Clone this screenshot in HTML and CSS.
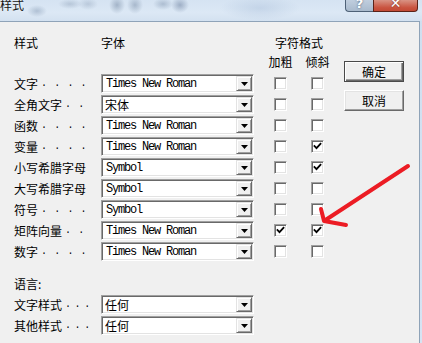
FILE: index.html
```html
<!DOCTYPE html>
<html lang="zh">
<head>
<meta charset="utf-8">
<link rel="stylesheet" href="styles.css">
</head>
<body>
<div class="window">
  <div class="titlebar">
    <span class="title">样式</span>
    <div class="caption-btns">
      <span class="cap help">?</span>
      <span class="cap close">✕</span>
    </div>
  </div>
  <div class="client">
    <div class="main">
      <div class="hdr hdr1">
        <span class="c-label">样式</span>
        <span class="c-font">字体</span>
        <span class="c-fmt">字符格式</span>
      </div>
      <div class="hdr hdr2">
        <span class="c-label"></span>
        <span class="c-font"></span>
        <span class="c-chk">加粗</span>
        <span class="c-chk c-chk2">倾斜</span>
      </div>

      <div class="rows">
        <div class="row">
          <span class="c-label">文字<span class="dots">. . . .</span></span>
          <div class="combo"><span class="val mono">Times New Roman</span><span class="drop"><svg width="7" height="4" viewBox="0 0 7 4"><path d="M0 0h7L3.5 4z"/></svg></span></div>
          <span class="cell"><span class="chk"></span></span>
          <span class="cell cell2"><span class="chk"></span></span>
        </div>
        <div class="row">
          <span class="c-label">全角文字<span class="dots">. .</span></span>
          <div class="combo"><span class="val">宋体</span><span class="drop"><svg width="7" height="4" viewBox="0 0 7 4"><path d="M0 0h7L3.5 4z"/></svg></span></div>
          <span class="cell"><span class="chk"></span></span>
          <span class="cell cell2"><span class="chk"></span></span>
        </div>
        <div class="row">
          <span class="c-label">函数<span class="dots">. . . .</span></span>
          <div class="combo"><span class="val mono">Times New Roman</span><span class="drop"><svg width="7" height="4" viewBox="0 0 7 4"><path d="M0 0h7L3.5 4z"/></svg></span></div>
          <span class="cell"><span class="chk"></span></span>
          <span class="cell cell2"><span class="chk"></span></span>
        </div>
        <div class="row">
          <span class="c-label">变量<span class="dots">. . . .</span></span>
          <div class="combo"><span class="val mono">Times New Roman</span><span class="drop"><svg width="7" height="4" viewBox="0 0 7 4"><path d="M0 0h7L3.5 4z"/></svg></span></div>
          <span class="cell"><span class="chk"></span></span>
          <span class="cell cell2"><span class="chk on"><svg width="9" height="9" viewBox="0 0 9 9"><path d="M1.5 4 L3.5 6.2 L7.5 1.8"/></svg></span></span>
        </div>
        <div class="row">
          <span class="c-label">小写希腊字母</span>
          <div class="combo"><span class="val mono">Symbol</span><span class="drop"><svg width="7" height="4" viewBox="0 0 7 4"><path d="M0 0h7L3.5 4z"/></svg></span></div>
          <span class="cell"><span class="chk"></span></span>
          <span class="cell cell2"><span class="chk on"><svg width="9" height="9" viewBox="0 0 9 9"><path d="M1.5 4 L3.5 6.2 L7.5 1.8"/></svg></span></span>
        </div>
        <div class="row">
          <span class="c-label">大写希腊字母</span>
          <div class="combo"><span class="val mono">Symbol</span><span class="drop"><svg width="7" height="4" viewBox="0 0 7 4"><path d="M0 0h7L3.5 4z"/></svg></span></div>
          <span class="cell"><span class="chk"></span></span>
          <span class="cell cell2"><span class="chk"></span></span>
        </div>
        <div class="row">
          <span class="c-label">符号<span class="dots">. . . .</span></span>
          <div class="combo"><span class="val mono">Symbol</span><span class="drop"><svg width="7" height="4" viewBox="0 0 7 4"><path d="M0 0h7L3.5 4z"/></svg></span></div>
          <span class="cell"><span class="chk"></span></span>
          <span class="cell cell2"><span class="chk"></span></span>
        </div>
        <div class="row">
          <span class="c-label">矩阵向量<span class="dots">. .</span></span>
          <div class="combo"><span class="val mono">Times New Roman</span><span class="drop"><svg width="7" height="4" viewBox="0 0 7 4"><path d="M0 0h7L3.5 4z"/></svg></span></div>
          <span class="cell"><span class="chk on"><svg width="9" height="9" viewBox="0 0 9 9"><path d="M1.5 4 L3.5 6.2 L7.5 1.8"/></svg></span></span>
          <span class="cell cell2"><span class="chk on"><svg width="9" height="9" viewBox="0 0 9 9"><path d="M1.5 4 L3.5 6.2 L7.5 1.8"/></svg></span></span>
        </div>
        <div class="row">
          <span class="c-label">数字<span class="dots">. . . .</span></span>
          <div class="combo"><span class="val mono">Times New Roman</span><span class="drop"><svg width="7" height="4" viewBox="0 0 7 4"><path d="M0 0h7L3.5 4z"/></svg></span></div>
          <span class="cell"><span class="chk"></span></span>
          <span class="cell cell2"><span class="chk"></span></span>
        </div>
      </div>

      <div class="lang">语言:</div>
      <div class="rows lang-rows">
        <div class="row">
          <span class="c-label">文字样式<span class="dots short">. . .</span></span>
          <div class="combo"><span class="val">任何</span><span class="drop"><svg width="7" height="4" viewBox="0 0 7 4"><path d="M0 0h7L3.5 4z"/></svg></span></div>
        </div>
        <div class="row">
          <span class="c-label">其他样式<span class="dots short">. . .</span></span>
          <div class="combo"><span class="val">任何</span><span class="drop"><svg width="7" height="4" viewBox="0 0 7 4"><path d="M0 0h7L3.5 4z"/></svg></span></div>
        </div>
      </div>
    </div>
    <div class="buttons">
      <span class="btn default">确定</span>
      <span class="btn">取消</span>
    </div>
  </div>
  <svg class="arrow" width="422" height="343" viewBox="0 0 422 343">
    <path d="M408 166 L324 221 M321 209 L324 221 L346 225"/>
  </svg>
</div>
</body>
</html>
```

FILE: styles.css
```css
* { box-sizing: border-box; }
html, body { margin: 0; padding: 0; }
body {
  width: 422px;
  height: 343px;
  overflow: hidden;
  font-family: "Noto Sans CJK SC", "Noto Sans", sans-serif;
  font-size: 12px;
  color: #000;
}
.window {
  position: relative;
  width: 422px;
  height: 343px;
  overflow: hidden;
  background: linear-gradient(180deg, #cfdff0 0%, #d6e4f3 100%);
  display: flex;
  flex-direction: column;
}
.titlebar {
  height: 21px;
  flex: none;
  display: flex;
  justify-content: space-between;
  align-items: flex-start;
  background:
    radial-gradient(ellipse 10px 6px at 37px 11px, rgba(140,160,185,0.55), rgba(140,160,185,0) 100%),
    radial-gradient(ellipse 12px 5px at 70px 4px, rgba(150,168,190,0.5), rgba(150,168,190,0) 100%),
    radial-gradient(ellipse 10px 6px at 88px 4px, rgba(150,168,190,0.45), rgba(150,168,190,0) 100%),
    radial-gradient(ellipse 8px 9px at 117px 5px, rgba(120,140,165,0.55), rgba(120,140,165,0) 100%),
    radial-gradient(ellipse 8px 9px at 135px 5px, rgba(120,140,165,0.5), rgba(120,140,165,0) 100%),
    radial-gradient(ellipse 10px 6px at 163px 4px, rgba(130,150,175,0.5), rgba(130,150,175,0) 100%),
    radial-gradient(ellipse 9px 8px at 180px 5px, rgba(110,130,160,0.55), rgba(110,130,160,0) 100%),
    radial-gradient(ellipse 40px 12px at 260px 8px, rgba(175,195,220,0.5), rgba(175,195,220,0) 100%),
    linear-gradient(180deg, #d5e3f2 0%, #dce8f5 60%, #d3e1f0 100%);
}
.title {
  font-size: 12px;
  line-height: 12px;
  margin-top: -1px;
  color: #141414;
  text-shadow: 0 0 3px rgba(255,255,255,0.8);
}
.caption-btns {
  display: flex;
  margin-right: 4px;
}
.cap {
  height: 12px;
  display: flex;
  justify-content: center;
  align-items: flex-end;
  overflow: hidden;
  color: #fff;
  font-family: "DejaVu Sans", sans-serif;
  font-weight: bold;
  line-height: 1;
}
.help {
  width: 28px;
  border: 1px solid #4e6177;
  border-top: none;
  border-right: none;
  border-bottom-left-radius: 4px;
  background: linear-gradient(180deg, #c0cede 0%, #a9bacd 100%);
  font-size: 13px;
  text-shadow: 0 0 2px #3d4f66;
  padding-bottom: 1px;
}
.close {
  width: 45px;
  border: 1px solid #5b2218;
  border-top: none;
  border-bottom-right-radius: 4px;
  background: linear-gradient(180deg, #d99384 0%, #c9533f 70%, #c24a35 100%);
  font-size: 14px;
  text-shadow: 0 0 2px #6b1a10;
  padding-bottom: 1px;
}

.client {
  flex: 1;
  width: 420px;
  background: #f0f0f0;
  border-top: 1px solid #8fa3b8;
  border-right: 1px solid #8fa3b8;
  display: flex;
  align-items: flex-start;
  padding: 13px 0 0 14px;
}
.main {
  width: 316px;
  display: flex;
  flex-direction: column;
}
.hdr {
  display: flex;
  height: 16px;
  line-height: 16px;
}
.hdr2 { margin-top: 3px; }
.c-label {
  width: 87px;
  flex: none;
  white-space: nowrap;
  line-height: 16px;
  display: flex;
  align-items: center;
}
.c-font { width: 167px; flex: none; }
.c-fmt { width: 62px; text-align: center; }
.c-chk { width: 25px; text-align: center; flex: none; }
.c-chk2 { margin-left: 12px; }

.rows {
  display: flex;
  flex-direction: column;
  margin-top: 3px;
}
.row {
  height: 21px;
  display: flex;
  align-items: center;
}
.dots {
  font-family: "Liberation Mono", monospace;
  font-size: 10px;
  letter-spacing: 0.6px;
  margin-left: 3px;
  white-space: pre;
}
.dots.short {
  letter-spacing: -1.2px;
  margin-left: 3px;
}
.combo {
  width: 153px;
  height: 19px;
  flex: none;
  display: flex;
  align-items: stretch;
  background: #fff;
  border: 1px solid;
  border-color: #a0a0a0 #fff #fff #a0a0a0;
  box-shadow: inset 1px 1px #696969, inset -1px -1px #e3e3e3;
  padding: 1px;
}
.val {
  flex: 1;
  padding-left: 2px;
  display: flex;
  align-items: center;
  font-size: 12px;
  line-height: 15px;
  white-space: nowrap;
  overflow: hidden;
}
.val.mono {
  font-family: "Liberation Mono", monospace;
  font-size: 12px;
  letter-spacing: -1.2px;
  padding-left: 3px;
  padding-top: 2px;
}
.drop {
  width: 16px;
  flex: none;
  background: #f0f0f0;
  border: 1px solid;
  border-color: #e3e3e3 #696969 #696969 #e3e3e3;
  box-shadow: inset 1px 1px #fff, inset -1px -1px #a0a0a0;
  display: flex;
  justify-content: center;
  align-items: center;
}
.drop svg { display: block; fill: #000; }

.cell {
  width: 25px;
  flex: none;
  margin-left: 14px;
  display: flex;
  justify-content: center;
}
.cell2 { margin-left: 12px; }
.chk {
  width: 13px;
  height: 13px;
  background: #fff;
  border: 1px solid;
  border-color: #a0a0a0 #fff #fff #a0a0a0;
  box-shadow: inset 1px 1px #696969, inset -1px -1px #e3e3e3;
  display: flex;
  justify-content: center;
  align-items: center;
}
.chk svg {
  display: block;
  fill: none;
  stroke: #000;
  stroke-width: 1.8;
  stroke-linecap: square;
}

.lang {
  margin-top: 14px;
  height: 16px;
  line-height: 16px;
}
.lang-rows { margin-top: 2px; }

.buttons {
  margin-left: 14px;
  margin-top: 26px;
  display: flex;
  flex-direction: column;
  gap: 8px;
}
.btn {
  width: 60px;
  height: 21px;
  display: flex;
  justify-content: center;
  align-items: center;
  background: #f0f0f0;
  border: 1px solid;
  border-color: #fff #696969 #696969 #fff;
  box-shadow: inset -1px -1px #a0a0a0, inset 1px 1px #e3e3e3;
  font-size: 12px;
  line-height: 14px;
}
.btn.default {
  border: 1px solid #4a4a4a;
  box-shadow: inset 1px 1px #fff, inset -1px -1px #696969, inset -2px -2px #a0a0a0;
}

.arrow {
  position: absolute;
  left: 0;
  top: 0;
  pointer-events: none;
}
.arrow path {
  fill: none;
  stroke: #ec1c24;
  stroke-width: 4;
  stroke-linecap: round;
  stroke-linejoin: round;
}
```
